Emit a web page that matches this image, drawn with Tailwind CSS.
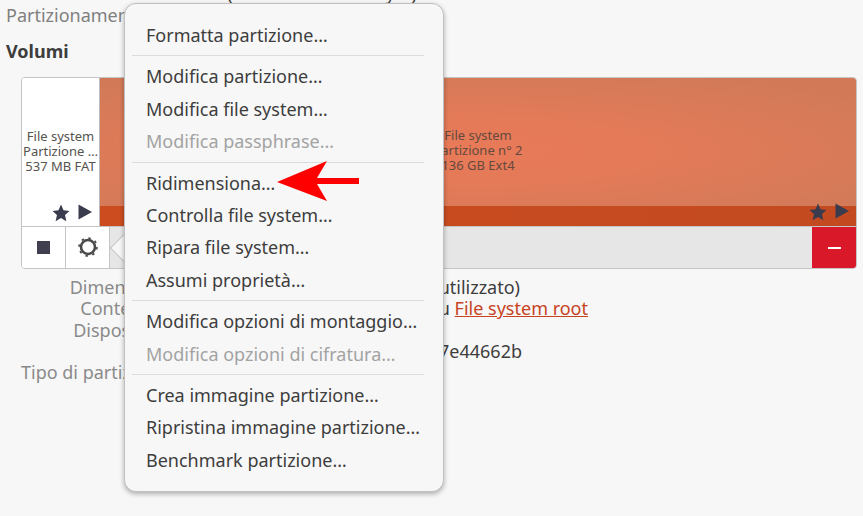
<!DOCTYPE html>
<html lang="it">
<head>
    <meta charset="UTF-8">
    <title>Dischi</title>
    <script src="https://cdn.jsdelivr.net/npm/@tailwindcss/browser@4"></script>
</head>
<body class="relative w-[863px] h-[516px] overflow-hidden bg-[#f7f7f7] font-['Noto_Sans',sans-serif] text-[18px] text-[#3d3d3d]">
    <!-- riga tagliata in alto -->
    <div class="absolute right-[446px] top-[-18px] leading-[22px] whitespace-nowrap">137 GB (136.970.000.000 byte)</div>

    <div class="pt-[4px] pl-[6px] h-[33px] leading-[22px] text-[#7f7f7f] whitespace-nowrap">Partizionamento</div>
    <div class="pl-[6px] h-[32px] leading-[36px] font-bold">Volumi</div>

    <!-- barra dei volumi -->
    <div class="ml-[21px] mt-[12px] w-[836px] h-[192px] border border-[#c4c4c4] rounded-[4px] overflow-hidden flex flex-col bg-white">
        <div class="flex h-[149px]">
            <div class="w-[78px] h-full flex flex-col border-r border-[#bcbcbc] bg-white">
                <div class="flex-1 flex flex-col justify-center items-center text-[13px] leading-[15px] text-[#55534e] pt-[20px] whitespace-nowrap">
                    <span>File system</span>
                    <span>Partizione …</span>
                    <span>537 MB FAT</span>
                </div>
                <div class="h-[22px] flex justify-end items-start gap-[8px] pr-[7px]">
                    <svg class="w-[18px] h-[18px]" viewBox="0.500 0.500 17 17"><path fill="#3a3c4e" d="M9 1l2.400 5.400 5.600.6-4.200 3.900 1.200 5.900L9 13.800 3.900 16.800l1.300-5.900L1 7l5.600-.6z"/></svg>
                    <svg class="w-[14px] h-[16px]" viewBox="0 0 14 16"><path fill="#3a3c4e" d="M0.500 0.500L14 8 0.500 15.500z"/></svg>
                </div>
            </div>
            <div class="flex-1 flex flex-col">
                <div class="flex-1 flex flex-col justify-center items-center pt-[17px] text-[13px] leading-[15px] text-[#66493e] whitespace-nowrap bg-[radial-gradient(ellipse_520px_85px_at_340px_73px,#e97a58_0%,#e47a58_40%,#d97a58_75%,#d27a58_100%)]">
                    <span>File system</span>
                    <span>Partizione n° 2</span>
                    <span>136 GB Ext4</span>
                </div>
                <div class="h-[20px] bg-gradient-to-r from-[#cc4c1f] to-[#c34a20] flex justify-end items-start gap-[8px] pr-[7px]">
                    <svg class="w-[18px] h-[18px] -mt-[3px]" viewBox="0.500 0.500 17 17"><path fill="#3a3c4e" d="M9 1l2.400 5.400 5.600.6-4.200 3.900 1.200 5.900L9 13.800 3.900 16.800l1.300-5.900L1 7l5.600-.6z"/></svg>
                    <svg class="w-[14px] h-[16px] -mt-[3px]" viewBox="0 0 14 16"><path fill="#3a3c4e" d="M0.500 0.500L14 8 0.500 15.500z"/></svg>
                </div>
            </div>
        </div>
        <!-- barra strumenti -->
        <div class="flex h-[42px] border-t border-[#c4c4c4]">
            <div class="w-[44px] flex items-center justify-center border-r border-[#c4c4c4] bg-white">
                <div class="w-[13px] h-[13px] bg-[#3f3f4f]"></div>
            </div>
            <div class="w-[44px] flex items-center justify-center border-r border-[#c4c4c4] bg-white">
                <svg class="w-[22px] h-[22px] -mt-[1px]" viewBox="0 0 22 22"><circle cx="11" cy="11" r="7" fill="none" stroke="#4a4a4a" stroke-width="2.600"/><circle cx="11" cy="11" r="9" fill="none" stroke="#4a4a4a" stroke-width="1.600" stroke-dasharray="2.500 4.570"/></svg>
            </div>
            <div class="flex-1 bg-[#e6e6e6]"></div>
            <div class="w-[44px] bg-[#d9182a] flex items-center justify-center">
                <div class="w-[13px] h-[2px] bg-white"></div>
            </div>
        </div>
    </div>

    <!-- dettagli: i valori restanti stanno sotto il menu -->
    <div class="ml-[21px] mt-[8px] w-[567px] grid grid-cols-[150px_1fr] gap-x-[7px] leading-[21.250px] whitespace-nowrap">
        <div class="text-right text-[#8a8a8a]">Dimensione</div>
        <div class="text-right pr-[68px]">(17,5% utilizzato)</div>
        <div class="text-right pr-[1px] text-[#8a8a8a]">Contenuto</div>
        <div class="text-right">Montato su <a class="text-[#c7431f] underline">File system root</a></div>
        <div class="text-right pr-[5px] text-[#8a8a8a]">Dispositivo</div>
        <div></div>
        <div class="text-right text-[#8a8a8a]">UUID</div>
        <div class="text-right pr-[66px]">7e44662b</div>
        <div class="text-[#8a8a8a]">Tipo di partizione</div>
        <div></div>
    </div>

    <!-- freccia del popover -->
    <div class="absolute left-[114px] top-[238px] w-[20px] h-[20px] rotate-45 bg-[#f7f7f7] border-l border-b border-[#c4c4c4]"></div>

    <!-- menu -->
    <div class="absolute left-[124px] top-[3px] w-[320px] h-[489px] bg-[#f7f7f7] border border-[#c0c0c0] rounded-[12px] shadow-[0_2px_5px_rgba(0,0,0,0.3)] pt-[15px] px-[7px] leading-[32.400px] whitespace-nowrap">
        <div class="px-[14px]">Formatta partizione…</div>
        <div class="my-[4px] border-t border-[#dcdcdc] w-[292px]"></div>
        <div class="px-[14px]">Modifica partizione…</div>
        <div class="px-[14px]">Modifica file system…</div>
        <div class="px-[14px] text-[#a3a3a3]">Modifica passphrase…</div>
        <div class="my-[4px] border-t border-[#dcdcdc] w-[292px]"></div>
        <div class="px-[14px]">Ridimensiona…</div>
        <div class="px-[14px]">Controlla file system…</div>
        <div class="px-[14px]">Ripara file system…</div>
        <div class="px-[14px]">Assumi proprietà…</div>
        <div class="my-[4px] border-t border-[#dcdcdc] w-[292px]"></div>
        <div class="px-[14px]">Modifica opzioni di montaggio…</div>
        <div class="px-[14px] text-[#a3a3a3]">Modifica opzioni di cifratura…</div>
        <div class="my-[4px] border-t border-[#dcdcdc] w-[292px]"></div>
        <div class="px-[14px]">Crea immagine partizione…</div>
        <div class="px-[14px]">Ripristina immagine partizione…</div>
        <div class="px-[14px]">Benchmark partizione…</div>
    </div>

    <!-- freccia rossa -->
    <svg class="absolute left-[277px] top-[160px] w-[84px] h-[44px]" viewBox="0 0 84 44"><path fill="#fe0000" d="M0 22L50 1 40 18H82V24H40L50 41z"/></svg>
</body>
</html>
